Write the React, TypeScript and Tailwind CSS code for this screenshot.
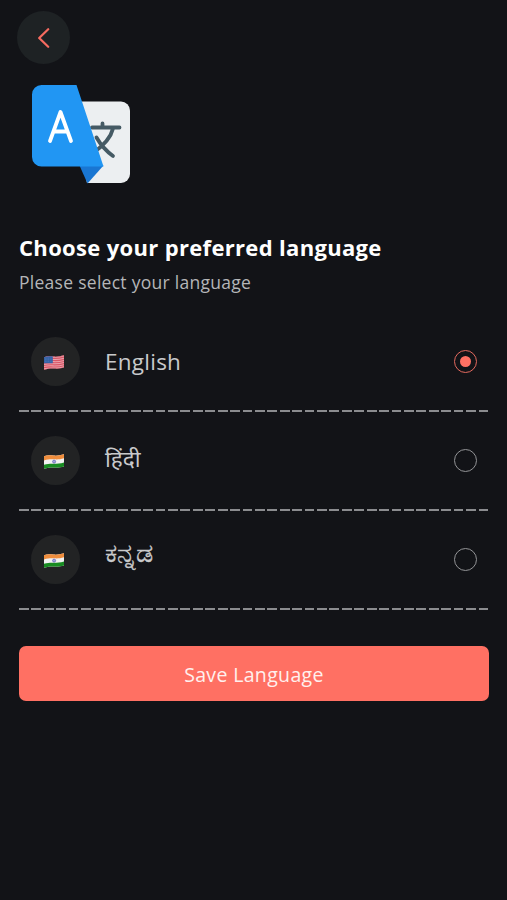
import { useState } from "react";

interface Language {
  code: string;
  label: string;
  flag: "us" | "in";
  labelClass: string;
}

const languages: Language[] = [
  { code: "en", label: "English", flag: "us", labelClass: "text-[22.5px] tracking-[0.25px]" },
  { code: "hi", label: "हिंदी", flag: "in", labelClass: "text-[22.5px] pb-1" },
  { code: "kn", label: "ಕನ್ನಡ", flag: "in", labelClass: "text-[27px] leading-8 pb-4 [-webkit-text-stroke:0.4px_#c8c9cb]" },
];

const wave = "M0 2.2C3 .8 6 1.200 9.500 1.500S16 1.200 19.600 .2V12.300C16 13.500 13 13.400 10 13.300S4 13.200 0 14.500Z";

function Flag({ country, id }: { country: "us" | "in"; id: string }) {
  const clip = `flag-${id}`;
  return (
    <svg width="20" height="15" viewBox="0 0 19.6 14.6" className="mt-px -ml-1">
      <clipPath id={clip}>
        <path d={wave} />
      </clipPath>
      <g clipPath={`url(#${clip})`}>
        {country === "us" ? (
          <>
            <path fill="#e9a3ac" d="M0 0h20v15H0z" />
            {[1.8, 3.9, 6, 8.1, 10.2, 12.3, 14.4].map((y) => (
              <path key={y} d={`M0 ${y}C4 ${y - 1} 7 ${y - 0.7} 10 ${y - 0.6}S16 ${y - 0.8} 20 ${y - 1.9}`} fill="none" stroke="#d95566" strokeWidth="1.1" />
            ))}
            <path fill="#3562a6" d="M0 0h8.600v8H0z" />
            <path stroke="#6f93c8" strokeWidth=".5" strokeDasharray=".6 1" d="M1 3h7M1 4.600h7M1 6.200h7" />
          </>
        ) : (
          <>
            <path fill="#f2f2f2" d="M0 0h20v15H0z" />
            <path fill="#ef8d3c" d="M0 0h20v4C16 5.400 13 5.300 10 5.200S4 5 0 6.200Z" />
            <path fill="#188c22" d="M0 10.600C4 9.400 7 9.600 10 9.600s6-.2 10-1.400V15H0Z" />
            <circle cx="9.900" cy="7.400" r="1.500" fill="#a5a7dc" stroke="#5357b3" strokeWidth=".6" />
          </>
        )}
      </g>
    </svg>
  );
}

function TranslateIcon() {
  return (
    <svg width="98" height="99" viewBox="0 0 98 99" fill="none" className="ml-[0.5px]">
      <path fill="#eceff1" d="M38 16.5h51a9 9 0 0 1 9 9V89a9 9 0 0 1-9 9H55Z" />
      <path
        stroke="#455a64"
        strokeWidth="3.8"
        strokeLinecap="round"
        strokeLinejoin="round"
        d="M60 42.500h27.500M70.500 38.500v4M81 43.500C79 52 71 61 61 68M64.500 52.500c4 7 9 13 16.500 18.500"
      />
      <path fill="#1976d2" d="M47.500 80.500h24L55.500 98.500Z" />
      <path fill="#2196f3" d="M9.500 0H44.500L71.500 81.500H9.500A9.500 9.500 0 0 1 0 72V9.500A9.500 9.500 0 0 1 9.500 0Z" />
      <path stroke="#fff" strokeWidth="3.800" strokeLinecap="round" strokeLinejoin="round" d="M18 56 28.500 27 39 56M22 46.500h13.500" />
    </svg>
  );
}

export default function App() {
  const [selected, setSelected] = useState("en");

  return (
    <div className="flex min-h-screen flex-col bg-[#121317] pt-[11px] pr-[18px] pl-[19px] font-['Open_Sans','Noto_Sans',sans-serif]">
      <button aria-label="Back" className="-ml-0.5 flex size-[53px] items-center justify-center rounded-full bg-[#1e2224]">
        <svg width="12" height="20" viewBox="0 0 12 20" fill="none">
          <path d="M10.200 1.200 1.200 10l9 8.800" stroke="#f76b60" strokeWidth="2.200" strokeLinecap="round" strokeLinejoin="round" />
        </svg>
      </button>

      <div className="mt-[21px] ml-3 h-[99px]">
        <TranslateIcon />
      </div>

      <h1 className="mt-[47px] h-8 text-[22px] leading-8 font-bold tracking-[0.33px] whitespace-nowrap text-white">
        Choose your preferred language
      </h1>
      <p className="mt-[7px] h-6 text-[17.5px] leading-6 tracking-[0.28px] text-[#b5b6b8]">Please select your language</p>

      <div className="mt-[19px]">
        {languages.map((lang) => (
          <div key={lang.code}>
            <button onClick={() => setSelected(lang.code)} className="flex h-[97px] w-full items-center pr-3 pl-3 text-left">
              <span className="flex size-[49px] items-center justify-center rounded-full bg-[#222324]">
                <Flag country={lang.flag} id={lang.code} />
              </span>
              <span className={`ml-[25px] flex-1 text-[#c8c9cb] ${lang.labelClass}`}>{lang.label}</span>
              <span
                className={`flex size-[23px] items-center justify-center rounded-full border-[1.5px] ${
                  selected === lang.code ? "border-[#e2695e]" : "border-[#929396]"
                }`}
              >
                {selected === lang.code && <span className="size-[11px] rounded-full bg-[#ff7063]" />}
              </span>
            </button>
            <div className="h-0.5 bg-[repeating-linear-gradient(90deg,#8b8c8f_0_9.8px,transparent_9.8px_12.42px)]" />
          </div>
        ))}
      </div>

      <button className="mt-[36px] h-[55px] w-full rounded-[7px] bg-[#ff7063] pt-0.5 text-[19.5px] tracking-[0.35px] text-[#fff0ee]">
        Save Language
      </button>
    </div>
  );
}
